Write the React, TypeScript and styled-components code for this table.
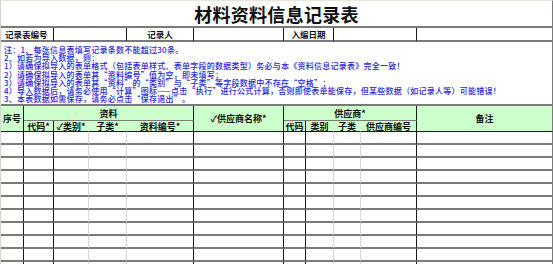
import React from "react";
import styled, { createGlobalStyle, css } from "styled-components";

const Global = createGlobalStyle`
  html, body {
    margin: 0;
    padding: 0;
    background: #ffffff;
    width: 553px;
    height: 264px;
    overflow: hidden;
  }
  body {
    font-family: "Noto Sans CJK SC", "Noto Sans", sans-serif;
  }
`;

const Sheet = styled.div`
  display: grid;
  grid-template-columns: 23px 30px 35px 38px 67px 90px 22px 28px 27px 56px 136px;
  grid-template-rows: 28px 14px 64px 15px 11px repeat(11, 13px);
  width: 552px;
  box-sizing: border-box;
  border-left: 1px solid #d4d4cc;
  font-family: "Noto Sans CJK SC", "Noto Sans", sans-serif;
`;

type Line = "dark" | "light" | "gray" | "none";

const lineColor = (l: Line) =>
  l === "dark" ? "#1a1a1a" : l === "light" ? "#d8d8d8" : l === "gray" ? "#7a7a7a" : "transparent";

const Cell = styled.div<{
  $r?: Line;
  $b?: Line;
  $bw?: number;
  $green?: boolean;
  $align?: "left" | "center";
  $col?: string;
  $row?: string;
}>`
  box-sizing: border-box;
  display: flex;
  align-items: center;
  justify-content: ${(p) => (p.$align === "left" ? "flex-start" : "center")};
  border-right: 1px solid ${(p) => lineColor(p.$r ?? "dark")};
  border-bottom: ${(p) => p.$bw ?? 2}px solid ${(p) => lineColor(p.$b ?? "gray")};
  background: ${(p) => (p.$green ? "#ccffcc" : "#ffffff")};
  overflow: hidden;
  white-space: nowrap;
  ${(p) =>
    p.$col &&
    css`
      grid-column: ${p.$col};
    `}
  ${(p) =>
    p.$row &&
    css`
      grid-row: ${p.$row};
    `}
`;

const TitleCell = styled(Cell)`
  grid-column: 1 / -1;
  grid-row: 1;
  font-size: 18px;
  font-weight: 700;
  color: #111;
  letter-spacing: 0.3px;
  border-top: 1px solid #e6e6dc;
  padding-top: 1px;
`;

const Label = styled(Cell)`
  grid-row: 2;
  font-size: 8.5px;
  font-weight: 700;
  color: #111;
  ${(p) =>
    p.$align === "left" &&
    css`
      padding-left: 4px;
    `}
`;

const Notes = styled(Cell)`
  grid-column: 1 / -1;
  grid-row: 3;
  flex-direction: column;
  align-items: flex-start;
  justify-content: flex-start;
  padding: 4px 0 0 3px;
  color: #2626dc;
  font-size: 8px;
  font-weight: 500;
  line-height: 8.2px;
  letter-spacing: 0.25px;
`;

const NoteLine = styled.div`
  white-space: nowrap;
  height: 8.2px;
`;

const Head = styled(Cell)`
  font-size: 9px;
  font-weight: 700;
  color: #111;
  line-height: 1;
`;

const Data = styled(Cell)``;

const notes = [
  "注：1、每张信息表填写记录条数不能超过30条。",
  "2、如若为导入数据，则：",
  "1）请确保拟导入的表单格式（包括表单样式、表单字段的数据类型）务必与本《资料信息记录表》完全一致！",
  "2）请确保拟导入的表单其“资料编号”值为空，即未填写；",
  "3）请确保拟导入的表单其“资料”的“类别”与“子类”等字段数据中不存在“空格”；",
  "4）导入数据后，请务必使用“计算”图标——点击“执行”进行公式计算，否则即使表单能保存，但某些数据（如记录人等）可能错误！",
  "3、本表数据如需保存，请务必点击“保存退出”。",
];

const dataRights: Line[] = [
  "dark",
  "dark",
  "light",
  "light",
  "dark",
  "dark",
  "dark",
  "light",
  "light",
  "dark",
  "gray",
];

export default function App() {
  return (
    <>
      <Global />
      <Sheet>
        <TitleCell $r="gray">材料资料信息记录表</TitleCell>

        <Label $align="left" $col="1 / 3">记录表编号</Label>
        <Label $col="3 / 5" />
        <Label $col="5 / 6">记录人</Label>
        <Label $col="6 / 7" />
        <Label $col="7 / 9">入编日期</Label>
        <Label $col="9 / 11" />
        <Label $col="11 / 12" $r="gray" />

        <Notes $r="gray">
          {notes.map((n) => (
            <NoteLine key={n}>{n}</NoteLine>
          ))}
        </Notes>

        <Head $green $b="dark" $bw={1} $col="1 / 2" $row="4 / 6">序号</Head>
        <Head $green $bw={1} $col="2 / 6" $row="4 / 5">资料</Head>
        <Head $green $b="dark" $bw={1} $col="6 / 7" $row="4 / 6">✓供应商名称*</Head>
        <Head $green $bw={1} $col="7 / 11" $row="4 / 5">供应商*</Head>
        <Head $green $r="gray" $b="dark" $bw={1} $col="11 / 12" $row="4 / 6">备注</Head>

        <Head $green $b="dark" $bw={1} $col="2 / 3" $row="5 / 6">代码*</Head>
        <Head $green $r="none" $b="dark" $bw={1} $col="3 / 4" $row="5 / 6">✓类别*</Head>
        <Head $green $r="none" $b="dark" $bw={1} $col="4 / 5" $row="5 / 6">子类*</Head>
        <Head $green $b="dark" $bw={1} $col="5 / 6" $row="5 / 6">资料编号*</Head>
        <Head $green $b="dark" $bw={1} $col="7 / 8" $row="5 / 6">代码</Head>
        <Head $green $r="none" $b="dark" $bw={1} $col="8 / 9" $row="5 / 6">类别</Head>
        <Head $green $r="none" $b="dark" $bw={1} $col="9 / 10" $row="5 / 6">子类</Head>
        <Head $green $b="dark" $bw={1} $col="10 / 11" $row="5 / 6">供应商编号</Head>

        {Array.from({ length: 11 }).map((_, row) =>
          dataRights.map((r, col) => (
            <Data
              key={`${row}-${col}`}
              $r={r}
              $b="gray"
              $bw={2}
              $col={`${col + 1} / ${col + 2}`}
              $row={`${row + 6} / ${row + 7}`}
            />
          ))
        )}
      </Sheet>
    </>
  );
}
